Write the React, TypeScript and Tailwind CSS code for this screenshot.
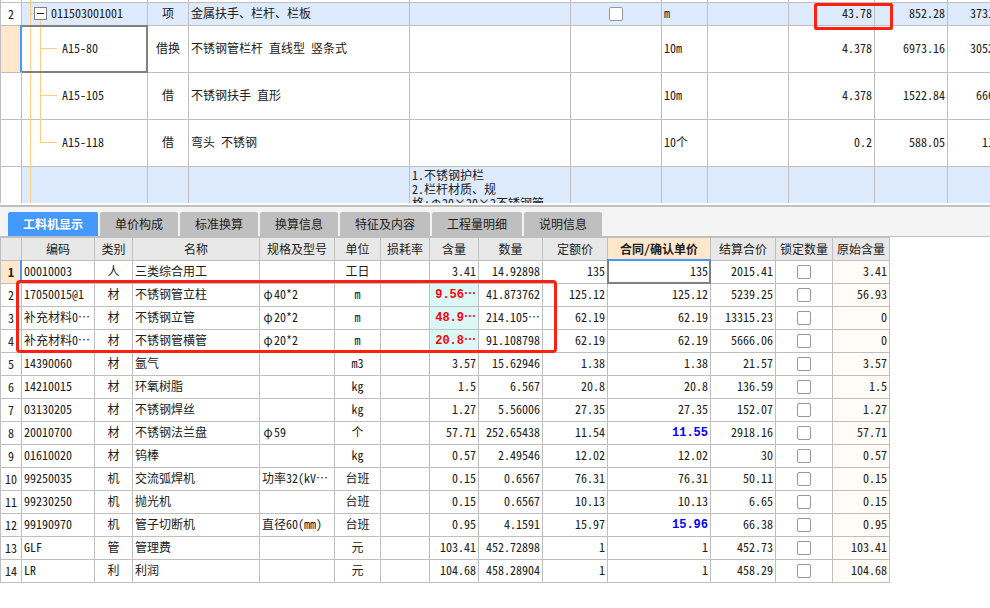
import React from "react";

type Guide = "root" | "child" | "last" | "none";

interface QuotaRow {
  index: string;
  code: string;
  kind: string;
  name: string;
  unit: string;
  qty: string;
  price: string;
  total: string;
  guide: Guide;
  tinted?: boolean;
  active?: boolean;
}

const quotaRows: QuotaRow[] = [
  { index: "2", code: "011503001001", kind: "项", name: "金属扶手、栏杆、栏板", unit: "m", qty: "43.78", price: "852.28", total: "37312.82", guide: "root", tinted: true },
  { index: "", code: "A15-80", kind: "借换", name: "不锈钢管栏杆 直线型 竖条式", unit: "10m", qty: "4.378", price: "6973.16", total: "30528.49", guide: "child", active: true },
  { index: "", code: "A15-105", kind: "借", name: "不锈钢扶手 直形", unit: "10m", qty: "4.378", price: "1522.84", total: "6666.99", guide: "child" },
  { index: "", code: "A15-118", kind: "借", name: "弯头 不锈钢", unit: "10个", qty: "0.2", price: "588.05", total: "117.61", guide: "last" },
];

const tabs = ["工料机显示", "单价构成", "标准换算", "换算信息", "特征及内容", "工程量明细", "说明信息"];

const headers = ["编码", "类别", "名称", "规格及型号", "单位", "损耗率", "含量", "数量", "定额价", "合同/确认单价", "结算合价", "锁定数量", "原始含量"];

interface Resource {
  code: string;
  kind: string;
  name: string;
  spec: string;
  unit: string;
  content: string;
  qty: string;
  quota: string;
  contract: string;
  total: string;
  original: string;
  edited?: "content" | "contract";
}

const resources: Resource[] = [
  { code: "00010003", kind: "人", name: "三类综合用工", spec: "", unit: "工日", content: "3.41", qty: "14.92898", quota: "135", contract: "135", total: "2015.41", original: "3.41" },
  { code: "17050015@1", kind: "材", name: "不锈钢管立柱", spec: "φ40*2", unit: "m", content: "9.56⋯", qty: "41.873762", quota: "125.12", contract: "125.12", total: "5239.25", original: "56.93", edited: "content" },
  { code: "补充材料0⋯", kind: "材", name: "不锈钢立管", spec: "φ20*2", unit: "m", content: "48.9⋯", qty: "214.105⋯", quota: "62.19", contract: "62.19", total: "13315.23", original: "0", edited: "content" },
  { code: "补充材料0⋯", kind: "材", name: "不锈钢管横管", spec: "φ20*2", unit: "m", content: "20.8⋯", qty: "91.108798", quota: "62.19", contract: "62.19", total: "5666.06", original: "0", edited: "content" },
  { code: "14390060", kind: "材", name: "氩气", spec: "", unit: "m3", content: "3.57", qty: "15.62946", quota: "1.38", contract: "1.38", total: "21.57", original: "3.57" },
  { code: "14210015", kind: "材", name: "环氧树脂", spec: "", unit: "kg", content: "1.5", qty: "6.567", quota: "20.8", contract: "20.8", total: "136.59", original: "1.5" },
  { code: "03130205", kind: "材", name: "不锈钢焊丝", spec: "", unit: "kg", content: "1.27", qty: "5.56006", quota: "27.35", contract: "27.35", total: "152.07", original: "1.27" },
  { code: "20010700", kind: "材", name: "不锈钢法兰盘", spec: "φ59", unit: "个", content: "57.71", qty: "252.65438", quota: "11.54", contract: "11.55", total: "2918.16", original: "57.71", edited: "contract" },
  { code: "01610020", kind: "材", name: "钨棒", spec: "", unit: "kg", content: "0.57", qty: "2.49546", quota: "12.02", contract: "12.02", total: "30", original: "0.57" },
  { code: "99250035", kind: "机", name: "交流弧焊机", spec: "功率32(kV⋯", unit: "台班", content: "0.15", qty: "0.6567", quota: "76.31", contract: "76.31", total: "50.11", original: "0.15" },
  { code: "99230250", kind: "机", name: "抛光机", spec: "", unit: "台班", content: "0.15", qty: "0.6567", quota: "10.13", contract: "10.13", total: "6.65", original: "0.15" },
  { code: "99190970", kind: "机", name: "管子切断机", spec: "直径60(mm)", unit: "台班", content: "0.95", qty: "4.1591", quota: "15.97", contract: "15.96", total: "66.38", original: "0.95", edited: "contract" },
  { code: "GLF", kind: "管", name: "管理费", spec: "", unit: "元", content: "103.41", qty: "452.72898", quota: "1", contract: "1", total: "452.73", original: "103.41" },
  { code: "LR", kind: "利", name: "利润", spec: "", unit: "元", content: "104.68", qty: "458.28904", quota: "1", contract: "1", total: "458.29", original: "104.68" },
];

const grid = "border-r border-b border-[#bfbfbf] px-0.5 whitespace-nowrap";
const label = `${grid} py-0 text-center overflow-hidden`;
const cell = `${grid} pt-0 pb-0.5 overflow-hidden`;
const anchor = `${grid} relative pt-0 pb-0.5`;
const strong = "font-['Liberation_Mono','Noto_Sans_Mono_CJK_SC','Noto_Sans_CJK_SC',monospace] font-bold";

function Check({ name }: { name: string }) {
  return (
    <input
      type="checkbox"
      aria-label={name}
      className="mx-auto block size-3.5 appearance-none rounded-xs border border-[#989898] bg-white"
    />
  );
}

// Symbols such as φ and ⋯ take a full character cell, like the ideographs around them.
function Wide({ text }: { text: string }) {
  return (
    <>
      {text.split(/([φΦ⋯])/).map((part, i) =>
        i % 2 === 1 ? (
          <span key={i} className="inline-block w-3 text-center">
            {part}
          </span>
        ) : (
          part
        ),
      )}
    </>
  );
}

function TreeGuide({ guide }: { guide: Guide }) {
  return (
    <>
      <span className="absolute top-0 -bottom-px left-2 w-px bg-[#ffcc80]" />
      {guide === "root" && (
        <>
          <span className="absolute top-2.5 left-2 h-px w-1 bg-[#ffcc80]" />
          <span className="absolute top-4 -bottom-px left-[18px] w-px bg-[#ffcc80]" />
        </>
      )}
      {guide === "child" && <span className="absolute top-0 -bottom-px left-[18px] w-px bg-[#ffcc80]" />}
      {guide === "last" && <span className="absolute top-0 left-[18px] h-[22px] w-px bg-[#ffcc80]" />}
      {(guide === "child" || guide === "last") && (
        <span className="absolute top-[22px] left-[18px] h-px w-[17px] bg-[#ffcc80]" />
      )}
    </>
  );
}

function QuotaTable() {
  return (
    <table className="w-[1021px] table-fixed border-separate border-spacing-0">
      <colgroup>
        <col className="w-[22px]" />
        <col className="w-[126px]" />
        <col className="w-[41px]" />
        <col className="w-[221px]" />
        <col className="w-[161px]" />
        <col className="w-[91px]" />
        <col className="w-[46px]" />
        <col className="w-[81px]" />
        <col className="w-[86px]" />
        <col className="w-[73px]" />
        <col className="w-[73px]" />
      </colgroup>
      <tbody>
        <tr className="h-[3px]">
          <td className={`${label} border-l`} />
          <td className={anchor}>
            <TreeGuide guide="none" />
          </td>
          {Array.from({ length: 9 }, (_, i) => (
            <td key={i} className={label} />
          ))}
        </tr>
        {quotaRows.map((row) => {
          const tint = row.tinted ? "bg-[#deeafe]" : "bg-white";
          return (
            <tr key={row.code} className={row.guide === "root" ? "h-[23px]" : "h-[47px]"}>
              <td className={`${label} border-l ${row.active ? "bg-[#ffe7cb]" : "bg-white"}`}>{row.index}</td>
              <td className={`${anchor} ${tint}`}>
                <TreeGuide guide={row.guide} />
                {row.guide === "root" ? (
                  <div className="flex items-center gap-1 pl-2.5">
                    <button type="button" aria-label="折叠" className="relative flex size-[13px] items-center justify-center border border-[#808080] bg-white">
                      <span className="h-px w-[7px] bg-[#202020]" />
                    </button>
                    <span>{row.code}</span>
                  </div>
                ) : (
                  <div className="pl-[38px]">{row.code}</div>
                )}
                {row.active && (
                  <>
                    <span className="absolute -top-px -right-px -bottom-px left-0 border-2 border-l-0 border-[#808080]" />
                    <span className="absolute -top-px bottom-0 -left-0.5 w-0.5 bg-[#4499ff]" />
                  </>
                )}
              </td>
              <td className={`${cell} text-center ${tint}`}>{row.kind}</td>
              <td className={`${cell} ${tint}`}>{row.name}</td>
              <td className={`${cell} ${tint}`} />
              <td className={`${label} ${tint}`}>{row.guide === "root" && <Check name="选择" />}</td>
              <td className={`${cell} ${tint}`}>{row.unit}</td>
              <td className={`${cell} ${tint}`} />
              <td className={`${anchor} text-right ${tint}`}>
                {row.qty}
                {row.guide === "root" && (
                  <span className="pointer-events-none absolute top-0 -right-[19px] z-10 h-[27px] w-[79px] rounded-xs border-3 border-[#ff2012]" />
                )}
              </td>
              <td className={`${cell} text-right ${tint}`}>{row.price}</td>
              <td className={`${cell} text-right ${tint}`}>{row.total}</td>
            </tr>
          );
        })}
        <tr className="bg-[#deeafe]">
          <td className="border-x border-[#bfbfbf] bg-white p-0" />
          <td className="relative border-r border-[#bfbfbf] p-0">
            <span className="absolute inset-y-0 left-2 w-px bg-[#ffcc80]" />
          </td>
          <td className="border-r border-[#bfbfbf] p-0" />
          <td className="border-r border-[#bfbfbf] p-0" />
          <td className="border-r border-[#bfbfbf] px-0.5 py-0 align-top">
            <div className="h-9 overflow-hidden pt-px leading-[14px]">
              1.不锈钢护栏
              <br />
              2.栏杆材质、规
              <br />
              <Wide text="格:Φ20×20×2不锈钢管" />
            </div>
          </td>
          {Array.from({ length: 6 }, (_, i) => (
            <td key={i} className="border-r border-[#bfbfbf] p-0" />
          ))}
        </tr>
      </tbody>
    </table>
  );
}

function ResourceTable() {
  return (
    <table className="w-[890px] table-fixed border-separate border-spacing-0 border-t border-[#bfbfbf]">
      <colgroup>
        <col className="w-[22px]" />
        <col className="w-[73px]" />
        <col className="w-[38px]" />
        <col className="w-[127px]" />
        <col className="w-[75px]" />
        <col className="w-[46px]" />
        <col className="w-[49px]" />
        <col className="w-[49px]" />
        <col className="w-[64px]" />
        <col className="w-[65px]" />
        <col className="w-[103px]" />
        <col className="w-[65px]" />
        <col className="w-[57px]" />
        <col className="w-[57px]" />
      </colgroup>
      <thead>
        <tr className="h-[23px] bg-[#e8e8e8]">
          <th className={`${label} border-l`} />
          {headers.map((title) => (
            <th
              key={title}
              scope="col"
              className={`${label} ${title === "合同/确认单价" ? "bg-[#ffe7cb] font-bold" : "font-normal"}`}
            >
              {title}
            </th>
          ))}
        </tr>
      </thead>
      <tbody>
        {resources.map((row, i) => (
          <tr key={i} className="h-[23px]">
            <td className={`${grid} relative border-l py-0 text-center ${i === 0 ? "bg-[#ffe7cb] font-bold" : ""}`}>
              {i + 1}
              {i === 0 && <span className="absolute -top-px -right-px bottom-0 w-0.5 bg-[#4499ff]" />}
            </td>
            <td className={cell}>
              <Wide text={row.code} />
            </td>
            <td className={`${cell} text-center`}>{row.kind}</td>
            <td className={cell}>{row.name}</td>
            <td className={cell}>
              <Wide text={row.spec} />
            </td>
            <td className={`${cell} text-center`}>{row.unit}</td>
            <td className={cell} />
            <td
              className={
                row.edited === "content"
                  ? `${grid} ${strong} overflow-hidden bg-[#daf8f8] py-0 text-right text-[#ff0000]`
                  : `${cell} text-right`
              }
            >
              <Wide text={row.content} />
            </td>
            <td className={`${cell} text-right`}>
              <Wide text={row.qty} />
            </td>
            <td className={`${cell} text-right`}>{row.quota}</td>
            <td
              className={
                row.edited === "contract"
                  ? `${grid} ${strong} py-0 text-right text-[#0000ff]`
                  : `${anchor} text-right`
              }
            >
              {row.contract}
              {i === 0 && (
                <span className="absolute -top-0.5 -right-px -bottom-px -left-px border-2 border-[#808080] border-t-[#4499ff]" />
              )}
            </td>
            <td className={`${cell} text-right`}>{row.total}</td>
            <td className={`${grid} py-0`}>
              <Check name={`锁定数量 ${i + 1}`} />
            </td>
            <td className={`${cell} bg-[#fffbf6] text-right`}>{row.original}</td>
          </tr>
        ))}
      </tbody>
    </table>
  );
}

export default function App() {
  return (
    <div className="min-h-screen w-full overflow-hidden bg-white font-['Noto_Sans_Mono_CJK_SC','Noto_Sans_CJK_SC',monospace] text-[12px] leading-[18px] text-[#202020]">
      <section className="overflow-hidden pb-0.5">
        <QuotaTable />
      </section>
      <nav role="tablist" className="flex gap-0.5 border-t-2 border-b border-[#bfbfbf] bg-[#f4f4f4] px-2 pt-[5px]">
        {tabs.map((tab, i) => (
          <button
            key={tab}
            type="button"
            role="tab"
            aria-selected={i === 0}
            className={`h-6 rounded-t-xs px-[15px] whitespace-nowrap ${i === 0 ? "bg-[#4499ff] font-bold text-white" : "bg-[#bfbfbf]"}`}
          >
            {tab}
          </button>
        ))}
      </nav>
      <section className="relative">
        <ResourceTable />
        <div className="pointer-events-none absolute top-[43px] left-4 h-[73px] w-[541px] rounded-sm border-3 border-[#ff2012]" />
      </section>
    </div>
  );
}
